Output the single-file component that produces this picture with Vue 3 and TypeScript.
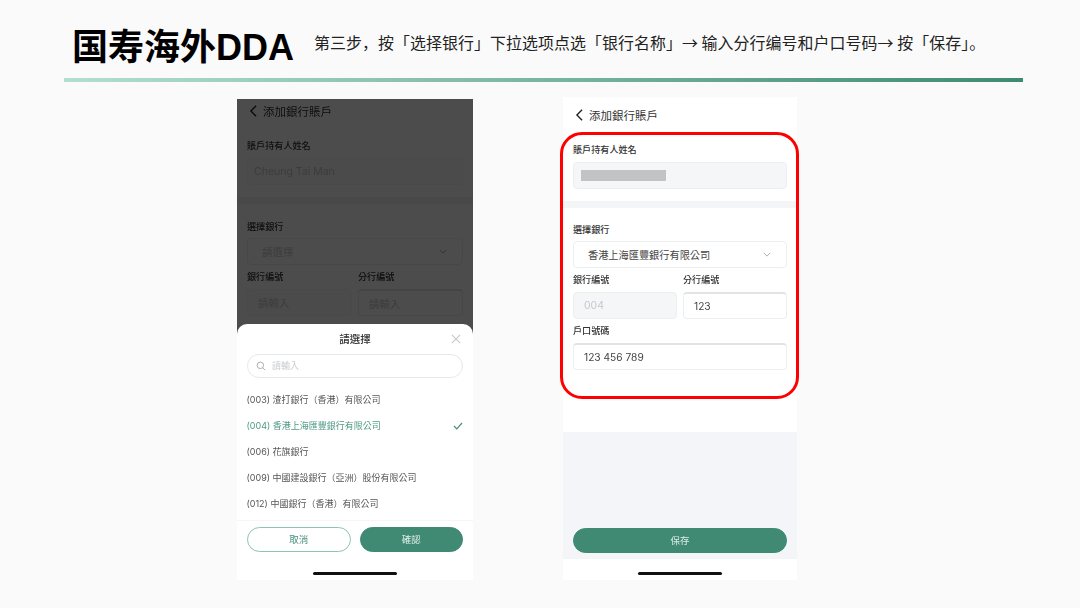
<script setup lang="ts">
interface Bank { code: string; name: string; selected?: boolean }
const banks: Bank[] = [
  { code: '(003)', name: '渣打銀行（香港）有限公司' },
  { code: '(004)', name: '香港上海匯豐銀行有限公司', selected: true },
  { code: '(006)', name: '花旗銀行' },
  { code: '(009)', name: '中國建設銀行（亞洲）股份有限公司' },
  { code: '(012)', name: '中國銀行（香港）有限公司' },
]
</script>

<template>
  <div class="slide">
    <header class="head">
      <h1 class="title">国寿海外DDA</h1>
      <p class="step">第三步，按「选择银行」下拉选项点选「银行名称」→ 输入分行编号和户口号码→ 按「保存」。</p>
    </header>
    <div class="rule"></div>

    <main class="phones">
      <!-- left: picker sheet open -->
      <section class="phone left">
        <div class="nav">
          <svg class="back" viewBox="0 0 10 14"><path d="M8 1 2 7l6 6" /></svg>
          <span>添加銀行賬戶</span>
        </div>
        <div class="group first">
          <label class="lab">賬戶持有人姓名</label>
          <div class="field off"><span class="ph name">Cheung Tai Man</span></div>
        </div>
        <div class="group second">
          <label class="lab">選擇銀行</label>
          <div class="field sel">
            <span class="ph">請選擇</span>
            <svg class="chev" viewBox="0 0 10 6"><path d="M1 1l4 4 4-4" /></svg>
          </div>
          <div class="pair">
            <div class="col">
              <label class="lab">銀行編號</label>
              <div class="field off"><span class="ph">請輸入</span></div>
            </div>
            <div class="col">
              <label class="lab">分行編號</label>
              <div class="field inset"><span class="ph">請輸入</span></div>
            </div>
          </div>
        </div>
        <div class="shade"></div>
        <div class="sheet">
          <div class="sheet-title">
            請選擇
            <svg class="close" viewBox="0 0 12 12"><path d="M1 1l10 10M11 1 1 11" /></svg>
          </div>
          <div class="search">
            <svg class="glass" viewBox="0 0 12 12"><circle cx="5.2" cy="5.2" r="3.9" /><path d="M8.2 8.2 11 11" /></svg>
            <span>請輸入</span>
          </div>
          <ul class="list">
            <li v-for="b in banks" :key="b.code" :class="{ on: b.selected }">
              <span>{{ b.code }} {{ b.name }}</span>
              <svg v-if="b.selected" class="tick" viewBox="0 0 10 8"><path d="M1 4l2.8 2.8L9 1" /></svg>
            </li>
          </ul>
          <div class="actions">
            <button class="btn ghost">取消</button>
            <button class="btn solid">確認</button>
          </div>
          <div class="home-wrap"><i class="home"></i></div>
        </div>
      </section>

      <!-- right: filled form -->
      <section class="phone right">
        <div class="nav">
          <svg class="back" viewBox="0 0 10 14"><path d="M8 1 2 7l6 6" /></svg>
          <span>添加銀行賬戶</span>
        </div>
        <div class="group first">
          <label class="lab">賬戶持有人姓名</label>
          <div class="field off"><i class="mask"></i></div>
        </div>
        <div class="group second tall">
          <label class="lab">選擇銀行</label>
          <div class="field sel">
            <span class="val bank">香港上海匯豐銀行有限公司</span>
            <svg class="chev" viewBox="0 0 10 6"><path d="M1 1l4 4 4-4" /></svg>
          </div>
          <div class="pair">
            <div class="col">
              <label class="lab">銀行編號</label>
              <div class="field off"><span class="ph">004</span></div>
            </div>
            <div class="col">
              <label class="lab">分行編號</label>
              <div class="field inset"><span class="val">123</span></div>
            </div>
          </div>
          <label class="lab acct">戶口號碼</label>
          <div class="field inset"><span class="val">123 456 789</span></div>
        </div>
        <div class="foot">
          <button class="btn solid wide">保存</button>
        </div>
        <div class="home-wrap"><i class="home"></i></div>
        <div class="ring"></div>
      </section>
    </main>
  </div>
</template>

<style scoped>
.slide {
  width: 1080px;
  height: 608px;
  overflow: hidden;
  background: #fafafa;
  font-family: "Liberation Sans", "Noto Sans CJK SC", sans-serif;
  display: flex;
  flex-direction: column;
}
.head {
  display: flex;
  align-items: center;
  height: 78px;
  padding: 0 0 0 72px;
  box-sizing: border-box;
}
.title {
  margin: 0;
  font-size: 36px;
  line-height: 44px;
  font-weight: 700;
  color: #000;
  position: relative;
  top: 9px;
  white-space: nowrap;
}
.step {
  margin: 0 0 0 20px;
  font-family: "Noto Sans CJK SC", sans-serif;
  font-size: 15.95px;
  letter-spacing: 0.06px;
  line-height: 22px;
  color: #222;
  position: relative;
  top: 3px;
  white-space: nowrap;
}
.rule {
  margin: 0 57px 0 64px;
  height: 3.5px;
  background: linear-gradient(90deg, #b3dfcf 0%, #3f8a75 100%);
}
.phones {
  display: flex;
  align-items: flex-end;
  gap: 90px;
  padding: 0 0 0 237px;
  height: 498px;
  box-sizing: border-box;
  font-family: Inter, "Noto Sans CJK TC", sans-serif;
}
.phone {
  position: relative;
  background: #fff;
  display: flex;
  flex-direction: column;
  color: #333;
  filter: blur(0.35px);
  font-size: 10px;
}
.phone.left { width: 236px; height: 481px; }
.phone.right { width: 234px; height: 483px; }
.nav {
  display: flex;
  align-items: center;
  gap: 5px;
  height: 35px;
  padding: 1px 12px 0;
  box-sizing: border-box;
  font-size: 11.5px;
  color: #333;
  flex: none;
}
.left .nav { height: 25px; padding-top: 0; }
.back { width: 9px; height: 12px; }
.back path { fill: none; stroke: #222; stroke-width: 1.6; }
.group {
  padding: 0 10px;
  flex: none;
}
.first {
  padding-top: 11px;
  padding-bottom: 12px;
  border-bottom: 7px solid #f3f5f7;
}
.left .first { padding-top: 15px; }
.second { padding-top: 15px; }
.left .second { padding-top: 16px; }
.left .second > .lab { margin-bottom: -1px; }
.tall { height: 224px; box-sizing: border-box; }
.lab {
  display: block;
  font-size: 9.1px;
  line-height: 13px;
  color: #333;
  font-weight: 500;
}
.field {
  margin-top: 6px;
  height: 27px;
  box-sizing: border-box;
  border: 1px solid #eceef0;
  border-radius: 4px;
  display: flex;
  align-items: center;
  padding: 0 10px;
  background: #fff;
  font-size: 10.5px;
}
.off { background: #f5f6f8; }
.left .off { background: #fcfcfd; border-color: #f4f4f6; }
.inset { border-top: 2px solid #e2e3e5; padding-top: 1px; }
.sel { justify-content: space-between; padding: 0 15px 0 14px; margin-bottom: 5px; }
.right .sel { margin-top: 5px; }
.ph { color: #c6c8cc; font-size: 10.5px; }
.name { margin-left: -4px; }
.val { color: #444; font-size: 10.2px; }
.bank { font-size: 10.2px; }
.mask { display: block; width: 85px; height: 11px; margin-left: -3px; background: #c3c3c3; }
.chev { width: 8px; height: 5px; }
.chev path { fill: none; stroke: #9a9ea4; stroke-width: 1; }
.pair { display: flex; gap: 6px; }
.col { flex: 1; }
.acct { margin-top: 5px; }
.foot {
  flex: 1;
  background: #f3f5f9;
  padding: 96px 10px 6px;
}
.right .home-wrap { height: 21px; }
.home-wrap {
  display: flex;
  justify-content: center;
  align-items: flex-end;
  height: 27px;
  padding-bottom: 5px;
  box-sizing: border-box;
  flex: none;
}
.home {
  display: block;
  width: 84px;
  height: 3px;
  border-radius: 2px;
  background: #111;
}
.btn {
  height: 25px;
  border-radius: 13px;
  font: inherit;
  font-size: 9.5px;
  padding: 0;
  cursor: pointer;
}
.solid { background: #408a74; color: #dfeee9; border: 1.5px solid #408a74; }
.ghost { background: #fff; color: #4a9480; border: 1.5px solid #8cc4b2; }
.wide { width: 100%; display: block; }
.ring {
  position: absolute;
  left: -3px;
  top: 35px;
  width: 239px;
  height: 267px;
  box-sizing: border-box;
  border: 3px solid #f00;
  border-radius: 22px;
}
.shade {
  position: absolute;
  inset: 0;
  background: rgba(0, 0, 0, 0.7);
}
.sheet {
  position: absolute;
  left: 0;
  right: 0;
  bottom: 0;
  height: 256px;
  background: #fff;
  border-radius: 10px 10px 0 0;
  display: flex;
  flex-direction: column;
}
.sheet-title {
  position: relative;
  height: 30px;
  flex: none;
  display: flex;
  align-items: center;
  justify-content: center;
  font-size: 10.5px;
  font-weight: 500;
  color: #333;
}
.close {
  position: absolute;
  right: 12px;
  top: 10px;
  width: 10px;
  height: 10px;
}
.close path { fill: none; stroke: #c4c6c9; stroke-width: 1.3; }
.search {
  flex: none;
  margin: 0 10px;
  height: 24px;
  box-sizing: border-box;
  border: 1px solid #e6e8ea;
  border-radius: 12px;
  display: flex;
  align-items: center;
  gap: 6px;
  padding: 0 8px;
  font-size: 9px;
  color: #c9cbce;
}
.glass { width: 10px; height: 10px; }
.glass circle, .glass path { fill: none; stroke: #9a9da2; stroke-width: 1; }
.list {
  list-style: none;
  margin: 9px 0 0;
  padding: 0 10px 0 9.5px;
  height: 134px;
  box-sizing: border-box;
  flex: none;
  border-bottom: 1px solid #f6f6f6;
}
.list li {
  height: 26px;
  display: flex;
  align-items: center;
  justify-content: space-between;
  font-size: 9px;
  color: #555;
}
.list li.on { color: #4f9a84; }
.tick { width: 10px; height: 8px; }
.tick path { fill: none; stroke: #4a8f7b; stroke-width: 1.2; }
.actions {
  display: flex;
  gap: 9px;
  padding: 6px 10px 0;
  flex: none;
}
.actions .btn { flex: 1; }
.sheet .home-wrap { margin-top: auto; }
</style>

<style>
html, body { margin: 0; background: #fafafa; }
</style>
